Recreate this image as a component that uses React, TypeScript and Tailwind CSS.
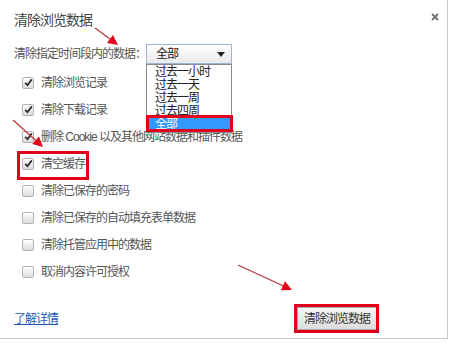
import React from 'react';

const font = { fontFamily: '"Liberation Sans", "Noto Sans CJK SC", sans-serif' };

const opciones = [
  { texto: '清除浏览记录', marcado: true },
  { texto: '清除下载记录', marcado: true },
  { texto: '删除 Cookie 以及其他网站数据和插件数据', marcado: true },
  { texto: '清空缓存', marcado: true },
  { texto: '清除已保存的密码', marcado: false },
  { texto: '清除已保存的自动填充表单数据', marcado: false },
  { texto: '清除托管应用中的数据', marcado: false },
  { texto: '取消内容许可授权', marcado: false },
];

const periodos = ['过去一小时', '过去一天', '过去一周', '过去四周'];

function Casilla({ marcado }: { marcado: boolean }) {
  return (
    <div className="w-[12px] h-[12px] rounded-[2px] border border-[#b3b3b3] bg-gradient-to-b from-white to-[#dcdcdc] flex items-center justify-center">
      {marcado && (
        <svg width="9" height="9" viewBox="0 0 9 9">
          <path d="M1.2 4.8 L3.5 7.2 L7.8 1.4" fill="none" stroke="#2b2b2b" strokeWidth="1.8" />
        </svg>
      )}
    </div>
  );
}

// flecha roja de anotación
function Flecha({ x1, y1, x2, y2 }: { x1: number; y1: number; x2: number; y2: number }) {
  const ang = Math.atan2(y2 - y1, x2 - x1);
  const largo = 10;
  const ancho = 5;
  const bx = x2 - largo * Math.cos(ang);
  const by = y2 - largo * Math.sin(ang);
  const px = -Math.sin(ang) * ancho;
  const py = Math.cos(ang) * ancho;
  return (
    <g>
      <line x1={x1} y1={y1} x2={bx} y2={by} stroke="#b8333a" strokeWidth="1.2" />
      <polygon points={`${x2},${y2} ${bx + px},${by + py} ${bx - px},${by - py}`} fill="#e6001a" />
    </g>
  );
}

export default function App() {
  return (
    <div className="relative w-[450px] h-[343px] bg-white overflow-hidden text-[#555]" style={font}>
      <div className="w-[448px] h-[339px] border-r border-b border-[#c9c9c9] pl-[14px] pt-[10px] relative">
        {/* Título */}
        <div className="h-[20px] flex items-center justify-between">
          <span className="text-[14px] tracking-[-1px] text-[#444]">清除浏览数据</span>
          <svg width="8" height="8" viewBox="0 0 8 8" className="mr-[8px] -mt-[6px]">
            <path d="M1 1 L7 7 M7 1 L1 7" stroke="#6f6f6f" strokeWidth="1.8" />
          </svg>
        </div>

        {/* Selector de periodo */}
        <div className="mt-[14px] h-[20px] flex items-center">
          <span className="w-[132px] text-[12px] tracking-[-1px]">清除指定时间段内的数据：</span>
          <div className="w-[86px] h-[20px] border border-[#9fb3d3] bg-gradient-to-b from-white to-[#e9e9e9] flex items-center justify-between pl-[9px] pr-[6px]">
            <span className="text-[12px] tracking-[-1px] text-[#222]">全部</span>
            <svg width="8" height="5" viewBox="0 0 8 5">
              <polygon points="0,0 8,0 4,5" fill="#222" />
            </svg>
          </div>
        </div>

        {/* Casillas */}
        <div className="mt-[5px] pl-[8px] flex flex-col">
          {opciones.map((o) => (
            <div key={o.texto} className="h-[27px] flex items-center gap-[7px]">
              <Casilla marcado={o.marcado} />
              <span className="text-[12px] tracking-[-1px]">{o.texto}</span>
            </div>
          ))}
        </div>

        {/* Pie */}
        <div className="mt-[22px] h-[23px] flex items-center justify-between pr-[70px]">
          <a className="text-[12px] tracking-[-1px] text-[#1d5bb8] underline">了解详情</a>
          <button className="w-[80px] h-[23px] border border-[#a9a9a9] bg-gradient-to-b from-[#f6f6f6] to-[#dcdcdc] text-[12px] tracking-[-1px] text-[#333]">
            清除浏览数据
          </button>
        </div>

        {/* Lista desplegable */}
        <div className="absolute left-[146px] top-[64px] w-[86px] border border-[#8a8a8a] bg-white flex flex-col py-[1px]">
          {periodos.map((p) => (
            <div key={p} className="h-[13px] leading-[13px] pl-[8px] text-[12px] tracking-[-1px] text-[#222]">
              {p}
            </div>
          ))}
          <div className="h-[13px] leading-[13px] mx-[1px] pl-[7px] bg-[#3399ff] text-[12px] tracking-[-1px] text-white">全部</div>
        </div>
      </div>

      {/* Recuadros rojos */}
      <div className="absolute left-[146px] top-[115px] w-[87px] h-[17px] border-[3px] border-[#e0001b]" />
      <div className="absolute left-[17px] top-[151px] w-[72px] h-[29px] border-[3px] border-[#e0001b]" />
      <div className="absolute left-[294px] top-[304px] w-[85px] h-[29px] border-[3px] border-[#e0001b]" />

      {/* Flechas */}
      <svg className="absolute inset-0 pointer-events-none" width="450" height="343">
        <Flecha x1={95} y1={28} x2={118} y2={45} />
        <Flecha x1={13} y1={120} x2={43} y2={147} />
        <Flecha x1={238} y1={265} x2={292} y2={290} />
      </svg>
    </div>
  );
}
